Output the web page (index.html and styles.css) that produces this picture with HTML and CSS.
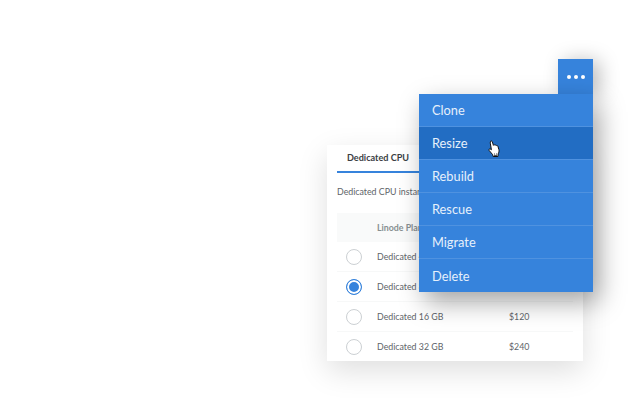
FILE: index.html
```html
<!DOCTYPE html>
<html lang="en">
<head>
<meta charset="utf-8">
<title>Linode actions</title>
<link rel="stylesheet" href="styles.css">
</head>
<body>
<div class="stage">
  <section class="card">
    <div class="tabs"><span class="tab">Dedicated CPU</span></div>
    <p class="desc">Dedicated CPU instances</p>
    <div class="table">
      <div class="row head"><span class="radio-cell"></span><span class="plan">Linode Plan</span></div>
      <div class="row"><span class="radio-cell"><span class="radio"></span></span><span class="plan">Dedicated 4 GB</span><span class="price">$30</span></div>
      <div class="row"><span class="radio-cell"><span class="radio on"></span></span><span class="plan">Dedicated 8 GB</span><span class="price">$60</span></div>
      <div class="row"><span class="radio-cell"><span class="radio"></span></span><span class="plan">Dedicated 16 GB</span><span class="price">$120</span></div>
      <div class="row"><span class="radio-cell"><span class="radio"></span></span><span class="plan">Dedicated 32 GB</span><span class="price">$240</span></div>
    </div>
  </section>
  <div class="trigger"><span class="dot"></span><span class="dot"></span><span class="dot"></span></div>
  <ul class="menu">
    <li class="item">Clone</li>
    <li class="item hover">Resize
      <svg class="cursor" width="14" height="18" viewBox="0 0 14 18"><path d="M3.6 1.2c.8-.5 1.6 0 1.8.8l1 3.3c.3-.6 1.2-.6 1.6 0 .4-.4 1.2-.3 1.5.3.5-.3 1.2 0 1.4.6l1 3.4c.3 1.5 0 3-.7 4.2l-.3 2.7H6.2l-.5-1.8-3.6-4.3c-.6-.8.3-1.900 1.300-1.300l1 .7-1.100-6.600c-.1-.7.1-1.600.3-1.800z" fill="#fff" stroke="#111" stroke-width="1" stroke-linejoin="round"/><path d="M7 14h1M9 14h1M7 15.400h3" stroke="#444" stroke-width="1"/></svg>
    </li>
    <li class="item">Rebuild</li>
    <li class="item">Rescue</li>
    <li class="item">Migrate</li>
    <li class="item">Delete</li>
  </ul>
</div>
</body>
</html>
```
FILE: styles.css
```css
* { box-sizing: border-box; }
html, body { margin: 0; padding: 0; background: #fff; }
body { font-family: Lato, "Open Sans", sans-serif; overflow: hidden; }
.stage { position: relative; width: 632px; height: 420px; padding: 145px 0 0 327px; }

.card {
  width: 256px;
  height: 216px;
  padding: 0 10px;
  background: #fff;
  box-shadow: 0 10px 28px rgba(0, 0, 0, .13);
  overflow: hidden;
}
.tabs { height: 28px; border-bottom: 2px solid #3683dc; display: flex; align-items: center; padding: 0 10px 1px; }
.tab { font-size: 9.100px; font-weight: 700; color: #3a3e44; }
.desc { margin: 13px 0 15px; font-size: 8.800px; line-height: 12px; color: #606469; white-space: nowrap; }

.table { display: flex; flex-direction: column; }
.row { display: flex; align-items: center; height: 30px; border-bottom: 1px solid #f7f8f8; font-size: 8.800px; color: #606469; }
.row.head { height: 29px; background: #f9fafa; border-bottom: 0; font-weight: 700; color: #888f91; }
.radio-cell { width: 40px; display: flex; padding-left: 9px; }
.plan { width: 132px; }
.radio { width: 16px; height: 16px; border-radius: 50%; border: 1px solid #ccd0d3; background: #fff; }
.radio.on { border-color: #3683dc; background: #3683dc; box-shadow: inset 0 0 0 2px #fff; }

.trigger {
  position: absolute;
  left: 558px;
  top: 59px;
  width: 35px;
  height: 35px;
  background: #3683dc;
  display: flex;
  align-items: center;
  justify-content: center;
  gap: 3px;
  box-shadow: 6px 2px 20px rgba(0, 0, 0, .28);
}
.dot { width: 4px; height: 4px; border-radius: 50%; background: #fff; }

.menu {
  position: absolute;
  left: 419px;
  top: 94px;
  width: 174px;
  margin: 0;
  padding: 0;
  list-style: none;
  background: #3683dc;
  box-shadow: 6px 10px 24px rgba(0, 0, 0, .36);
}
.item {
  position: relative;
  height: 33px;
  padding-left: 13px;
  display: flex;
  align-items: center;
  font-size: 12.800px;
  color: #e6f0fb;
  border-bottom: 1px solid #4f92e0;
}
.item:last-child { border-bottom: 0; }
.item.hover { background: #226dc3; }
.cursor { position: absolute; left: 68px; top: 13px; }
```
